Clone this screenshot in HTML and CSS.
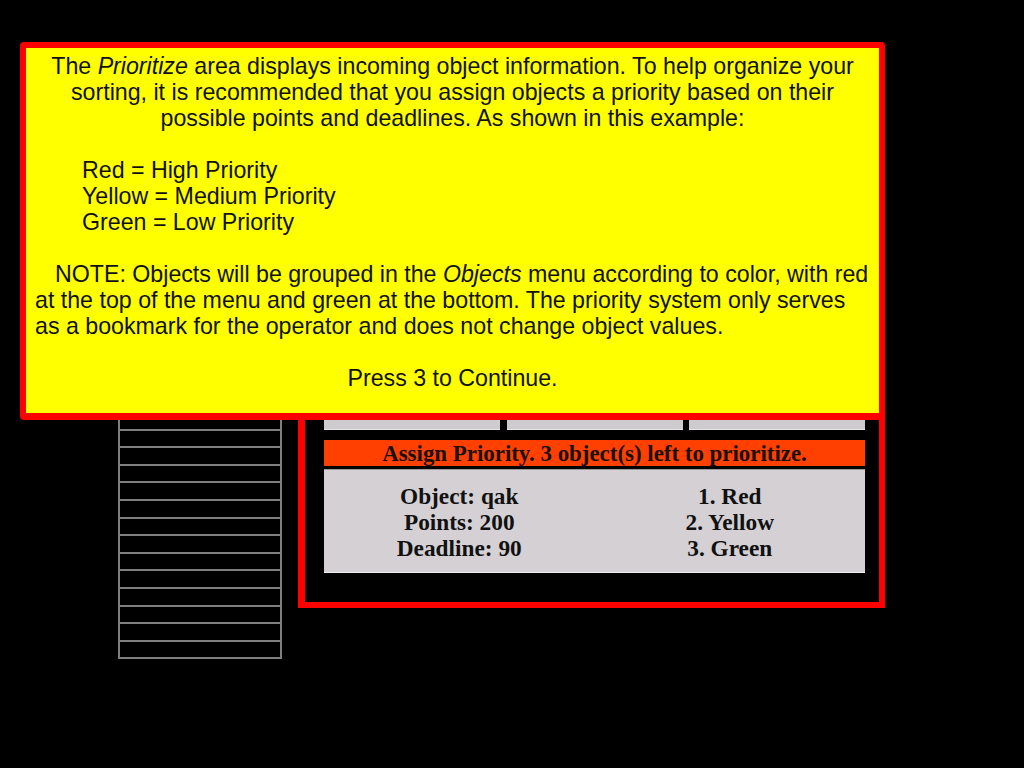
FILE: index.html
```html
<!DOCTYPE html>
<html lang="en">
<head>
  <meta charset="UTF-8">
  <meta name="viewport" content="width=device-width, initial-scale=1.0">
  <title>Prioritize</title>
  <link rel="stylesheet" href="styles.css">
</head>
<body>
  <div class="screen">
    <div class="object-list" id="object-list"></div>

    <div class="panel">
      <div class="slots">
        <div class="slot"></div>
        <div class="slot"></div>
        <div class="slot"></div>
      </div>
      <div class="banner">Assign Priority. 3 object(s) left to prioritize.</div>
      <div class="info">
        <div class="info-col">
          <div>Object: qak</div>
          <div>Points: 200</div>
          <div>Deadline: 90</div>
        </div>
        <div class="info-col">
          <div>1. Red</div>
          <div>2. Yellow</div>
          <div>3. Green</div>
        </div>
      </div>
    </div>

    <div class="tutorial">
      <p class="center">The <em>Prioritize</em> area displays incoming object information. To help organize your<br>
      sorting, it is recommended that you assign objects a priority based on their<br>
      possible points and deadlines. As shown in this example:</p>
      <p class="legend">Red = High Priority<br>
      Yellow = Medium Priority<br>
      Green = Low Priority</p>
      <p class="note">NOTE: Objects will be grouped in the <em>Objects</em> menu according to color, with red<br>
      at the top of the menu and green at the bottom. The priority system only serves<br>
      as a bookmark for the operator and does not change object values.</p>
      <p class="center">Press 3 to Continue.</p>
    </div>
  </div>

  <script>
    // empty rows of the object menu
    const list = document.getElementById('object-list');
    for (let i = 0; i < 31; i++) {
      const row = document.createElement('div');
      row.className = 'row';
      list.appendChild(row);
    }
  </script>
</body>
</html>
```

FILE: styles.css
```css
body {
  margin: 0;
  padding: 0;
  background: #000;
  font-family: 'Liberation Sans', Arial, sans-serif;
}

.screen {
  position: relative;
  width: 1024px;
  height: 768px;
  display: flex;
  align-items: flex-start;
  padding-left: 118px;
  box-sizing: border-box;
}

.object-list {
  margin-top: 112px;
  width: 164px;
  display: grid;
  grid-auto-rows: 17.6px;
  border-top: 2px solid #7f7f7f;
  box-sizing: border-box;
}

.row {
  border: 2px solid #7f7f7f;
  border-top: none;
}

.panel {
  margin-left: 16px;
  margin-top: 60px;
  width: 587px;
  box-sizing: border-box;
  border: 6px solid #ff0000;
  border-left-width: 7px;
  padding: 14px 14px 29px 19px;
}

.slots {
  display: grid;
  grid-template-columns: repeat(3, 1fr);
  gap: 6.5px;
  height: 350px;
}

.slot {
  background: #cdcbcd;
  border-bottom: 1px solid #e6e6e6;
}

.banner {
  margin-top: 10px;
  height: 26px;
  line-height: 27px;
  background: #ff4000;
  color: #1a1008;
  text-align: center;
  font-family: 'Liberation Serif', 'Times New Roman', serif;
  font-weight: bold;
  font-size: 22.9px;
}

.info {
  margin-top: 3px;
  height: 104px;
  box-sizing: border-box;
  padding: 13px 0 13px;
  background: #d4d0d4;
  border-top: 1px solid #9a9a9a;
  border-bottom: 1px solid #eeeeee;
  display: grid;
  grid-template-columns: 1fr 1fr;
  font-family: 'Liberation Serif', 'Times New Roman', serif;
  font-weight: bold;
  font-size: 23.3px;
  line-height: 26px;
  color: #111;
  text-align: center;
}

.tutorial {
  position: absolute;
  left: 20px;
  top: 42px;
  width: 865px;
  height: 378px;
  box-sizing: border-box;
  background: #ffff00;
  border: 6px solid #ff0000;
  border-bottom-width: 7px;
  border-radius: 4px;
  padding: 5px 9px 0;
  color: #111;
  font-size: 23.2px;
  line-height: 26px;
  white-space: nowrap;
}

.tutorial p {
  margin: 0 0 26px;
}

.center {
  text-align: center;
}

.legend {
  padding-left: 47px;
}

.note {
  text-indent: 20px;
}
```
